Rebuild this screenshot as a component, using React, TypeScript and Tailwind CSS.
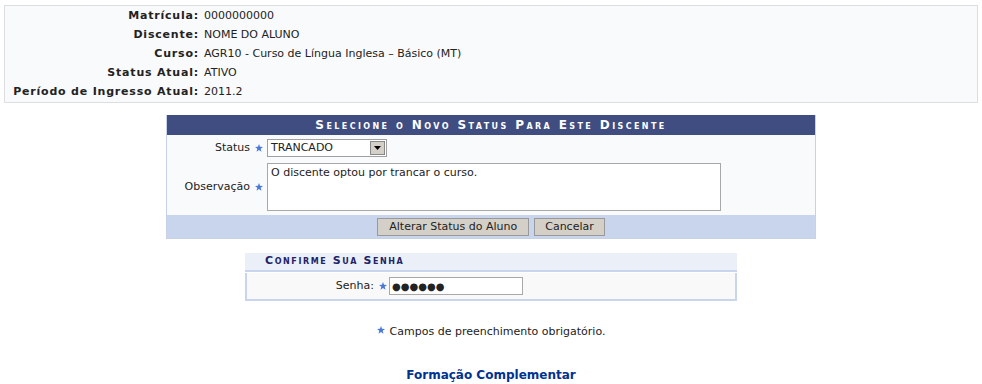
import React from "react";

function Star() {
  return (
    <svg width="8" height="8" viewBox="0 0 10 10" className="inline-block">
      <polygon
        points="5,0 6.3,3.5 10,3.6 7.1,5.9 8.1,9.6 5,7.4 1.9,9.6 2.9,5.9 0,3.6 3.7,3.5"
        fill="#4a7ad6"
      />
    </svg>
  );
}

const info = [
  { label: "Matrícula:", value: "0000000000" },
  { label: "Discente:", value: "NOME DO ALUNO" },
  { label: "Curso:", value: "AGR10 - Curso de Língua Inglesa – Básico (MT)" },
  { label: "Status Atual:", value: "ATIVO" },
  { label: "Período de Ingresso Atual:", value: "2011.2" },
];

export default function App() {
  return (
    <div
      className="w-[982px] h-[384px] overflow-hidden bg-white text-[11px] text-[#222]"
      style={{ fontFamily: '"DejaVu Sans", Verdana, sans-serif' }}
    >
      <div className="ml-[4px] mt-[5px] w-[974px] h-[98px] border border-[#dcdde0] bg-[#f9fafb] pt-[1px]">
        {info.map((row) => (
          <div key={row.label} className="flex h-[19px] items-center">
            <div className="w-[194px] text-right font-bold tracking-[0.8px] text-[#222]">{row.label}</div>
            <div className="pl-[5px]">{row.value}</div>
          </div>
        ))}
      </div>

      <div className="mx-auto mt-[12px] w-[650px] border border-[#c8d2e6] border-t-0 bg-[#f9fafc]">
        <div className="h-[20px] bg-[#404d80] flex items-center justify-center text-white font-bold [font-variant:small-caps] tracking-[2.4px] text-[12px] leading-none">
          Selecione o Novo Status Para Este Discente
        </div>
        <div className="flex items-center h-[26px]">
          <div className="w-[100px] flex justify-end items-center gap-[5px] pr-[4px]">
            <span>Status</span>
            <Star />
          </div>
          <div className="w-[120px] h-[18px] border border-[#a0a0a0] bg-white flex items-center justify-between pl-[3px] pr-[1px]">
            <span>TRANCADO</span>
            <div className="w-[15px] h-[14px] bg-[#d4d0c8] border border-[#888] flex items-center justify-center">
              <svg width="7" height="4" viewBox="0 0 7 4">
                <polygon points="0,0 7,0 3.5,4" fill="#000" />
              </svg>
            </div>
          </div>
        </div>
        <div className="flex h-[54px] pt-[2px]">
          <div className="w-[100px] flex justify-end items-center gap-[5px] pr-[4px] pb-[4px]">
            <span>Observação</span>
            <Star />
          </div>
          <div className="w-[454px] h-[48px] border border-[#a8a8a8] bg-white px-[3px] pt-[1px]">
            O discente optou por trancar o curso.
          </div>
        </div>
        <div className="h-[23px] bg-[#c8d5ec] flex items-center justify-center gap-[5px]">
          <button className="h-[18px] px-[11px] bg-[#d4d0c8] border border-[#999] text-[11px] leading-none">
            Alterar Status do Aluno
          </button>
          <button className="h-[18px] px-[10px] bg-[#d4d0c8] border border-[#999] text-[11px] leading-none">
            Cancelar
          </button>
        </div>
      </div>

      <div className="mx-auto mt-[14px] w-[492px]">
        <div className="h-[19px] bg-[#ebf0f8] border-b-2 border-[#c8d5ec] flex items-center pl-[20px] text-[#222266] font-bold [font-variant:small-caps] tracking-[1.6px] text-[11px]">
          Confirme Sua Senha
        </div>
        <div className="h-[28px] mt-[1px] border-2 border-t-0 border-[#c8d5ec] bg-[#f9f9f9] flex items-center">
          <div className="w-[142px] flex justify-end items-center gap-[5px] pr-[2px]">
            <span>Senha:</span>
            <Star />
          </div>
          <div className="w-[134px] h-[18px] border border-[#a8a8a8] bg-white flex items-center pl-[2px] text-[10px]">
            ●●●●●●
          </div>
        </div>
      </div>

      <div className="mt-[23px] flex justify-center items-start gap-[5px] text-[11px]">
        <span className="mt-[-2px]"><Star /></span>
        <span>Campos de preenchimento obrigatório.</span>
      </div>

      <div className="mt-[26px] text-center font-bold text-[#003390] text-[12px] leading-[16px]">
        Formação Complementar
      </div>
    </div>
  );
}
